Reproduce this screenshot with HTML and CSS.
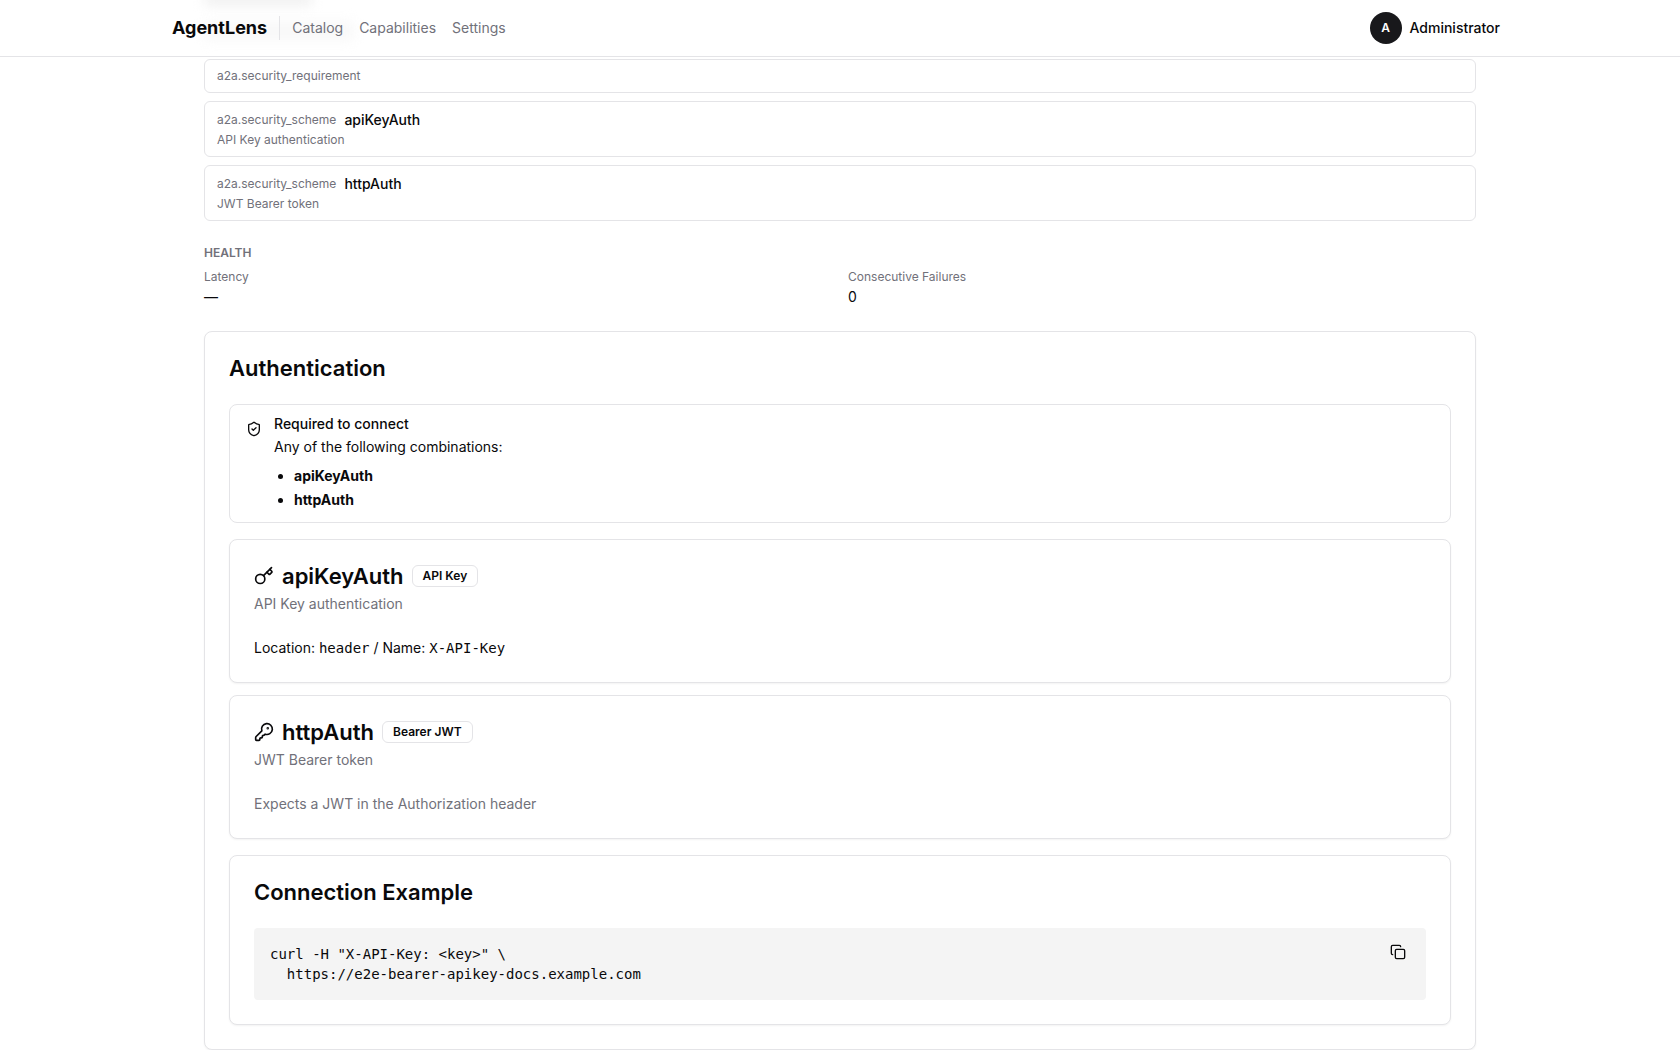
FILE: index.html
```
<!DOCTYPE html>
<html lang="en">
<head>
  <meta charset="UTF-8">
  <meta name="viewport" content="width=device-width, initial-scale=1.0">
  <title>AgentLens</title>
  <link rel="stylesheet" href="styles.css">
</head>
<body>

<header class="topbar">
  <div class="topbar-inner">
    <a href="#" class="logo">AgentLens</a>
    <nav class="nav-links">
      <a href="#catalog">Catalog</a>
      <a href="#capabilities">Capabilities</a>
      <a href="#settings">Settings</a>
    </nav>
    <button type="button" class="user-menu">
      <span class="avatar">A</span>
      Administrator
    </button>
  </div>
</header>

<main class="content">
  <!-- Capabilities -->
  <ul class="capabilities">
    <li class="capability">
      <span class="kind">a2a.security_requirement</span>
    </li>
    <li class="capability">
      <div class="capability-head">
        <span class="kind">a2a.security_scheme</span>
        <span class="name">apiKeyAuth</span>
      </div>
      <p class="note">API Key authentication</p>
    </li>
    <li class="capability">
      <div class="capability-head">
        <span class="kind">a2a.security_scheme</span>
        <span class="name">httpAuth</span>
      </div>
      <p class="note">JWT Bearer token</p>
    </li>
  </ul>

  <!-- Health -->
  <section class="health">
    <h3>Health</h3>
    <dl class="stats">
      <div>
        <dt>Latency</dt>
        <dd>—</dd>
      </div>
      <div>
        <dt>Consecutive Failures</dt>
        <dd>0</dd>
      </div>
    </dl>
  </section>

  <!-- Authentication -->
  <section class="card">
    <h2>Authentication</h2>
    <div class="auth-body">
      <div class="alert">
        <svg class="icon-sm" viewBox="0 0 24 24">
          <path d="M20 13c0 5-3.5 7.5-7.66 8.95a1 1 0 0 1-.67-.01C7.5 20.5 4 18 4 13V6a1 1 0 0 1 1-1c2 0 4.5-1.2 6.24-2.72a1.17 1.17 0 0 1 1.52 0C14.51 3.81 17 5 19 5a1 1 0 0 1 1 1z"/>
          <path d="m9 12 2 2 4-4"/>
        </svg>
        <div>
          <h5>Required to connect</h5>
          <p>Any of the following combinations:</p>
          <ul>
            <li>apiKeyAuth</li>
            <li>httpAuth</li>
          </ul>
        </div>
      </div>

      <div class="schemes">
        <article class="card">
          <div class="scheme-title">
            <svg class="icon-md" viewBox="0 0 24 24">
              <path d="m15.5 7.5 2.3 2.3a1 1 0 0 0 1.4 0l2.1-2.1a1 1 0 0 0 0-1.4L19 4"/>
              <path d="m21 2-9.6 9.6"/>
              <circle cx="7.5" cy="15.5" r="5.5"/>
            </svg>
            <h2>apiKeyAuth</h2>
            <span class="badge">API Key</span>
          </div>
          <p class="description">API Key authentication</p>
          <p class="detail">Location: <code>header</code> / Name: <code>X-API-Key</code></p>
        </article>

        <article class="card">
          <div class="scheme-title">
            <svg class="icon-md" viewBox="0 0 24 24">
              <path d="M2.586 17.414A2 2 0 0 0 2 18.828V21a1 1 0 0 0 1 1h3a1 1 0 0 0 1-1v-1a1 1 0 0 1 1-1h1a1 1 0 0 0 1-1v-1a1 1 0 0 1 1-1h.172a2 2 0 0 0 1.414-.586l.814-.814a6.5 6.5 0 1 0-4-4z"/>
              <circle cx="16.5" cy="7.5" r=".5" fill="currentColor"/>
            </svg>
            <h2>httpAuth</h2>
            <span class="badge">Bearer JWT</span>
          </div>
          <p class="description">JWT Bearer token</p>
          <p class="detail muted">Expects a JWT in the Authorization header</p>
        </article>
      </div>

      <article class="card">
        <h2>Connection Example</h2>
        <div class="snippet">
          <pre>curl -H "X-API-Key: &lt;key&gt;" \
  https://e2e-bearer-apikey-docs.example.com</pre>
          <button type="button" class="copy" aria-label="Copy">
            <svg class="icon-sm" viewBox="0 0 24 24">
              <rect x="8" y="8" width="14" height="14" rx="2"/>
              <path d="M4 16c-1.100 0-2-.9-2-2V4c0-1.100.9-2 2-2h10c1.100 0 2 .9 2 2"/>
            </svg>
          </button>
        </div>
      </article>
    </div>
  </section>
</main>

</body>
</html>
```

FILE: styles.css
```
* {
  box-sizing: border-box;
  margin: 0;
  padding: 0;
}
body {
  font-family: Inter, "Liberation Sans", sans-serif;
  font-size: 14px;
  line-height: 20px;
  color: #09090b;
  background-color: #fff;
}
ul {
  list-style: none;
}
a {
  text-decoration: none;
}
button {
  font: inherit;
  color: inherit;
  background: none;
  border: none;
  cursor: pointer;
}
svg {
  flex-shrink: 0;
  fill: none;
  stroke: currentColor;
  stroke-width: 2;
  stroke-linecap: round;
  stroke-linejoin: round;
}
.icon-sm {
  width: 16px;
  height: 16px;
}
.icon-md {
  width: 20px;
  height: 20px;
}

/* Top bar */
.topbar {
  position: sticky;
  top: 0;
  background-color: #fff;
  border-bottom: 1px solid #e4e4e7;
  overflow: hidden;
}
/* soft shade of the content that has scrolled under the bar */
.topbar-inner::before,
.topbar-inner::after {
  content: "";
  position: absolute;
  z-index: -1;
  left: 64px;
  filter: blur(6px);
}
.topbar-inner::before {
  top: -8px;
  width: 108px;
  height: 14px;
  background-color: #f1f1f1;
}
.topbar-inner::after {
  top: 22px;
  width: 150px;
  height: 18px;
  background-color: #f8f8f8;
}
.topbar-inner {
  position: relative;
  z-index: 0;
  display: flex;
  align-items: center;
  max-width: 1400px;
  height: 56px;
  margin: 0 auto;
  padding: 0 32px;
}
.logo {
  padding-right: 12px;
  color: #09090b;
  font-size: 18px;
  font-weight: 700;
  line-height: 24px;
  border-right: 1px solid #e4e4e7;
}
.nav-links {
  display: flex;
  gap: 16px;
  margin-left: 12px;
}
.nav-links a {
  color: #71717a;
}
.user-menu {
  display: flex;
  align-items: center;
  gap: 8px;
  margin-left: auto;
  padding: 0 8px;
  font-weight: 500;
}
.avatar {
  width: 32px;
  height: 32px;
  border-radius: 50%;
  background-color: #18181b;
  color: #fff;
  font-size: 12px;
  font-weight: 600;
  line-height: 32px;
  text-align: center;
}

.content {
  max-width: 1336px;
  margin: 0 auto;
  padding: 2px 32px 0;
}

/* Capabilities */
.capabilities {
  display: flex;
  flex-direction: column;
  gap: 8px;
}
.capability {
  padding: 8px 12px;
  border: 1px solid #e4e4e7;
  border-radius: 6px;
  font-size: 12px;
  line-height: 16px;
}
.capability-head {
  display: flex;
  align-items: center;
  gap: 8px;
}
.kind,
.note {
  color: #71717a;
}
.kind {
  display: block;
}
.name {
  font-size: 14px;
  font-weight: 500;
  line-height: 20px;
}
.note {
  margin-top: 2px;
}

/* Health */
.health {
  margin: 24px 0;
}
.health h3 {
  color: #71717a;
  font-size: 12px;
  font-weight: 600;
  line-height: 16px;
  text-transform: uppercase;
}
.stats {
  display: grid;
  grid-template-columns: 1fr 1fr;
  gap: 16px;
  margin-top: 8px;
}
.stats dt {
  margin-bottom: 2px;
  color: #71717a;
  font-size: 12px;
  line-height: 16px;
}

/* Cards */
.card {
  padding: 24px;
  border: 1px solid #e4e4e7;
  border-radius: 8px;
  background-color: #fff;
  box-shadow: 0 1px 2px rgba(0, 0, 0, 0.05);
}
.card h2 {
  font-size: 22px;
  font-weight: 600;
  line-height: 24px;
}
.auth-body {
  display: flex;
  flex-direction: column;
  gap: 16px;
  margin-top: 24px;
}
.alert {
  display: flex;
  gap: 12px;
  padding: 12px 16px;
  border: 1px solid #e4e4e7;
  border-radius: 8px;
}
.alert svg {
  margin-top: 4px;
}
.alert h5 {
  margin-bottom: 4px;
  font-size: 14px;
  font-weight: 500;
  line-height: 14px;
}
.alert p {
  line-height: 23px;
}
.alert ul {
  display: flex;
  flex-direction: column;
  gap: 4px;
  margin-top: 8px;
  padding-left: 20px;
  font-weight: 700;
  list-style: disc;
}
.schemes {
  display: flex;
  flex-direction: column;
  gap: 12px;
}
.scheme-title {
  display: flex;
  align-items: center;
  gap: 8px;
}
.badge {
  padding: 2px 10px;
  border: 1px solid #e4e4e7;
  border-radius: 6px;
  font-size: 12px;
  font-weight: 600;
  line-height: 16px;
}
.description {
  margin-top: 6px;
  color: #71717a;
}
.detail {
  margin-top: 24px;
}
.muted {
  color: #71717a;
}
code,
pre {
  font-family: "DejaVu Sans Mono", "Liberation Mono", monospace;
  font-size: 14px;
}

/* Connection example */
.snippet {
  position: relative;
  margin-top: 24px;
}
.snippet pre {
  padding: 16px;
  border-radius: 4px;
  background-color: #f4f4f4;
  overflow-x: auto;
}
.copy {
  position: absolute;
  top: 8px;
  right: 8px;
  display: flex;
  align-items: center;
  height: 32px;
  padding: 0 12px;
}
```
